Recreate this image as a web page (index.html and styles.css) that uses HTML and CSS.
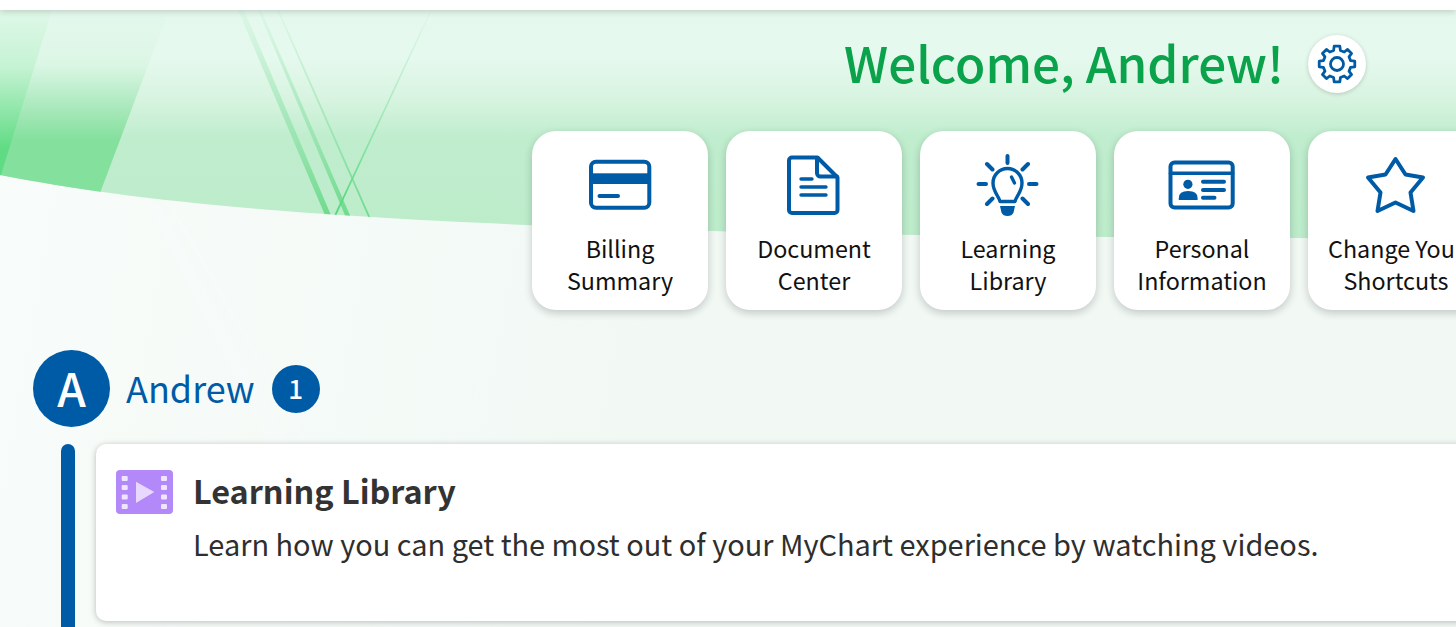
FILE: index.html
```html
<!DOCTYPE html>
<html lang="en">
<head>
  <meta charset="UTF-8" />
  <meta name="viewport" content="width=device-width, initial-scale=1.0"/>
  <title>Welcome | MyChart</title>
  <link rel="stylesheet" href="styles.css">
</head>
<body>
  <!-- Background art behind the header -->
  <svg class="backdrop" width="1456" height="627" viewBox="0 0 1456 627" aria-hidden="true">
    <defs>
      <linearGradient id="band" x1="0" y1="10" x2="0" y2="240" gradientUnits="userSpaceOnUse">
        <stop offset="0" stop-color="#e4f8ed"/>
        <stop offset="0.2" stop-color="#e6f9ee"/>
        <stop offset="0.38" stop-color="#d8f4e1"/>
        <stop offset="0.56" stop-color="#bfedcd"/>
        <stop offset="1" stop-color="#bdeccb"/>
      </linearGradient>
      <linearGradient id="leftBand" x1="0" y1="10" x2="0" y2="140" gradientUnits="userSpaceOnUse">
        <stop offset="0" stop-color="#e4f8ed"/>
        <stop offset="0.42" stop-color="#dcf6e5"/>
        <stop offset="0.72" stop-color="#aeeac0"/>
        <stop offset="1" stop-color="#84e09d"/>
      </linearGradient>
      <linearGradient id="edge" x1="0" y1="10" x2="0" y2="150" gradientUnits="userSpaceOnUse">
        <stop offset="0" stop-color="#dff8e9"/>
        <stop offset="0.4" stop-color="#c6f3d4"/>
        <stop offset="1" stop-color="#5fdb83"/>
      </linearGradient>
      <linearGradient id="stripe" x1="0" y1="10" x2="0" y2="215" gradientUnits="userSpaceOnUse">
        <stop offset="0" stop-color="#d4f5e0" stop-opacity="0.5"/>
        <stop offset="0.5" stop-color="#a8e8bc"/>
        <stop offset="1" stop-color="#6fdb8e"/>
      </linearGradient>
      <linearGradient id="fade" x1="0" y1="10" x2="0" y2="215" gradientUnits="userSpaceOnUse">
        <stop offset="0" stop-color="#dcf7e6" stop-opacity="0.6"/>
        <stop offset="1" stop-color="#4fd678"/>
      </linearGradient>
      <clipPath id="bandClip">
        <path d="M0 0H1456V238.500C560 238 220 218 0 175Z"/>
      </clipPath>
    </defs>
    <path d="M0 0H1456V238.500C560 238 220 218 0 175Z" fill="url(#band)"/>
    <g clip-path="url(#bandClip)">
      <polygon points="0,10 169,10 100,193 0,176" fill="url(#leftBand)"/>
      <polygon points="0,10 52,10 0,178" fill="url(#edge)"/>
      <polygon points="238,10 244,10 333,220 327,220" fill="url(#stripe)"/>
      <polygon points="258,10 261,10 352,220 347,220" fill="url(#stripe)"/>
      <polygon points="277,10 279,10 371.500,220 369.500,220" fill="url(#stripe)"/>
      <polygon points="430.500,10 432,10 334,220 332,220" fill="url(#fade)"/>
    </g>
    <!-- faint streaks under the curve -->
    <g fill="#ffffff" opacity="0.18">
      <polygon points="148,205 160,206 290,445 270,445"/>
      <polygon points="170,208 175,209 310,445 304,445"/>
      <polygon points="482,380 485,380 450,445 447,445"/>
    </g>
  </svg>

  <header class="topbar"></header>

  <main class="page">
    <section class="welcome">
      <h1 class="welcome-title">Welcome, Andrew!</h1>
      <button class="gear-btn" aria-label="Settings">
        <svg width="40" height="40" viewBox="-20 -20 40 40" fill="none" stroke="#005ba6" stroke-width="2.800" stroke-linejoin="round">
          <polygon points="-3.39,-13.58 -2.82,-17.78 2.82,-17.78 3.39,-13.58 7.21,-12 10.58,-14.57 14.57,-10.58 12,-7.21 13.58,-3.39 17.78,-2.82 17.78,2.82 13.58,3.39 12,7.21 14.57,10.58 10.58,14.57 7.21,12 3.39,13.58 2.82,17.78 -2.82,17.78 -3.39,13.58 -7.21,12 -10.58,14.57 -14.57,10.58 -12,7.21 -13.58,3.39 -17.78,2.82 -17.78,-2.82 -13.58,-3.39 -12,-7.21 -14.57,-10.58 -10.58,-14.57 -7.21,-12"/>
          <circle r="6.500"/>
        </svg>
      </button>
    </section>

    <nav class="shortcuts">
      <a class="shortcut">
        <svg class="shortcut-icon" viewBox="0 0 70 64" fill="none">
          <rect x="6" y="8.800" width="58.300" height="46" rx="5"/>
          <rect class="solid" x="6" y="20.300" width="58.300" height="10.700"/>
          <path d="M14.500 43H33"/>
        </svg>
        <span>Billing<br>Summary</span>
      </a>
      <a class="shortcut">
        <svg class="shortcut-icon" viewBox="0 0 70 64" fill="none">
          <path d="M13 4.500H38.500L58.500 24.500V57a3 3 0 0 1-3 3H13a3 3 0 0 1-3-3V7.500a3 3 0 0 1 3-3Z"/>
          <path d="M38 5V20a3.500 3.500 0 0 0 3.500 3.500H58"/>
          <path class="thin" d="M22 26H33M22 34H47M22 42H47"/>
        </svg>
        <span>Document<br>Center</span>
      </a>
      <a class="shortcut">
        <svg class="shortcut-icon" viewBox="0 0 70 64" fill="none">
          <path d="M34.500 3V10M5.500 31H13M56 31H63.500M14 11L19.500 16.500M55 11L49.500 16.500M14 51L19.500 45.500M55 51L49.500 45.500"/>
          <path class="thin" d="M27 48.500C26 43 20 39 20 30A14.500 14.500 0 0 1 49 30C49 39 43 43 42 48.500Z"/>
          <path class="thin" d="M38.500 24L41.500 30"/>
          <path class="filled" d="M27 53H42L40.500 59.500Q39 63 34.500 63Q30 63 28.500 59.500Z"/>
        </svg>
        <span>Learning<br>Library</span>
      </a>
      <a class="shortcut">
        <svg class="shortcut-icon" viewBox="0 0 70 64" fill="none">
          <rect x="3.500" y="9.500" width="62.200" height="45" rx="4"/>
          <path class="thin" d="M3.500 20.300H65.700"/>
          <circle class="filled" cx="20.900" cy="31.300" r="4.600"/>
          <path class="filled" d="M11.800 47V45Q11.800 38 21.200 38Q30.600 38 30.600 45V47Z"/>
          <path d="M36 28.700H57M36 37H57M36 44.700H47.500"/>
        </svg>
        <span>Personal<br>Information</span>
      </a>
      <a class="shortcut">
        <svg class="shortcut-icon" viewBox="0 0 70 64" fill="none">
          <polygon points="34.500,6 44.500,21.500 62,24.500 49.500,39.500 52.500,58 34.500,49.500 16.500,58 19.500,39.500 7,24.500 24.500,21.500"/>
        </svg>
        <span>Change Your<br>Shortcuts</span>
      </a>
    </nav>

    <section class="feed">
      <div class="feed-head">
        <div class="avatar">A</div>
        <div class="feed-name">Andrew</div>
        <div class="badge">1</div>
      </div>
      <div class="feed-body">
        <div class="timeline"></div>
        <article class="feed-card">
          <svg class="film-icon" width="57" height="44" viewBox="0 0 57 44">
            <rect width="57" height="44" rx="4" fill="#b388f8"/>
            <g fill="#efe5fe">
              <rect x="5.700" y="6" width="6" height="5" rx="1"/>
              <rect x="5.700" y="15" width="6" height="5" rx="1"/>
              <rect x="5.700" y="24.500" width="6" height="5" rx="1"/>
              <rect x="5.700" y="34" width="6" height="5" rx="1"/>
              <rect x="45" y="6" width="6" height="5" rx="1"/>
              <rect x="45" y="15" width="6" height="5" rx="1"/>
              <rect x="45" y="24.500" width="6" height="5" rx="1"/>
              <rect x="45" y="34" width="6" height="5" rx="1"/>
            </g>
            <polygon points="20,11.700 38.300,22 20,33" fill="#e8d8fd"/>
          </svg>
          <div class="feed-text">
            <h3>Learning Library</h3>
            <p>Learn how you can get the most out of your MyChart experience by watching videos.</p>
          </div>
        </article>
      </div>
    </section>
  </main>
</body>
</html>
```

FILE: styles.css
```css
:root {
  --blue: #005ba6;
  --green: #0aa24b;
  --bg: #f2f9f5;
  --text: #2e2e2e;
}

* {
  box-sizing: border-box;
}

html, body {
  height: 100%;
}

body {
  margin: 0;
  height: 627px;
  overflow: hidden;
  position: relative;
  background: linear-gradient(100deg, #f8fcfa 0%, var(--bg) 45%);
  color: var(--text);
  font-family: "Noto Sans CJK JP", "Source Sans Pro", "Noto Sans", sans-serif;
}

.backdrop {
  position: absolute;
  top: 0;
  left: 0;
}

.topbar {
  position: relative;
  height: 10px;
  background: #ffffff;
  box-shadow: 0 1px 7px rgba(0,0,0,0.2);
}

.page {
  position: relative;
}

/* Welcome row */
.welcome {
  display: flex;
  justify-content: flex-end;
  align-items: center;
  gap: 24px;
  padding: 25px 90px 0 0;
}

.welcome-title {
  margin: 0 0 4px;
  font-size: 49.400px;
  line-height: 54px;
  font-weight: 500;
  color: var(--green);
}

.gear-btn {
  display: flex;
  align-items: center;
  justify-content: center;
  width: 58px;
  height: 58px;
  padding: 0;
  border: none;
  border-radius: 50%;
  background: #ffffff;
  box-shadow: 0 1px 4px rgba(0,0,0,0.18);
}

/* Shortcut cards */
.shortcuts {
  display: flex;
  gap: 18px;
  padding-left: 532px;
  margin-top: 38px;
}

.shortcut {
  flex: none;
  width: 176px;
  height: 179px;
  padding-top: 22px;
  background: #ffffff;
  border-radius: 24px;
  box-shadow: 0 3px 9px rgba(0,0,0,0.2);
  text-align: center;
  color: #111111;
  font-size: 23.300px;
  line-height: 32px;
}

.shortcut-icon {
  display: block;
  width: 70px;
  height: 64px;
  margin: 0 auto 15px;
}

.shortcut-icon * {
  stroke: var(--blue);
  stroke-width: 4;
  stroke-linecap: round;
  stroke-linejoin: round;
}

.shortcut-icon .thin {
  stroke-width: 3.400;
}

.shortcut-icon .filled,
.shortcut-icon .solid {
  fill: var(--blue);
  stroke-width: 0;
}

.shortcut span {
  display: block;
  white-space: nowrap;
}

/* Feed */
.feed {
  margin-top: 40px;
}

.feed-head {
  display: flex;
  align-items: center;
  padding-left: 33px;
}

.avatar {
  width: 77px;
  height: 77px;
  border-radius: 50%;
  background: var(--blue);
  color: #ffffff;
  font-size: 46px;
  font-weight: 500;
  line-height: 75px;
  text-align: center;
}

.feed-name {
  margin: -4px 0 0 16px;
  font-size: 36px;
  line-height: 48px;
  color: var(--blue);
}

.badge {
  width: 48px;
  height: 48px;
  margin-left: 17px;
  border-radius: 50%;
  background: var(--blue);
  color: #ffffff;
  font-size: 26px;
  font-weight: 500;
  line-height: 46px;
  text-align: center;
}

.feed-body {
  display: flex;
  gap: 21px;
  height: 200px;
  margin-top: 17px;
  padding-left: 61px;
}

.timeline {
  flex: none;
  width: 14px;
  background: var(--blue);
  border-radius: 7px 7px 0 0;
}

.feed-card {
  display: flex;
  gap: 20px;
  flex: none;
  width: 1400px;
  height: 177px;
  padding: 26px 20px;
  background: #ffffff;
  border-radius: 10px;
  box-shadow: 0 1px 6px rgba(0,0,0,0.25);
}

.film-icon {
  flex: none;
}

.feed-text h3 {
  margin: -1px 0 0;
  font-size: 32.400px;
  line-height: 42px;
  font-weight: 600;
  color: #333333;
}

.feed-text p {
  margin: 13px 0 0;
  font-size: 28.950px;
  line-height: 38px;
  color: var(--text);
}
```
